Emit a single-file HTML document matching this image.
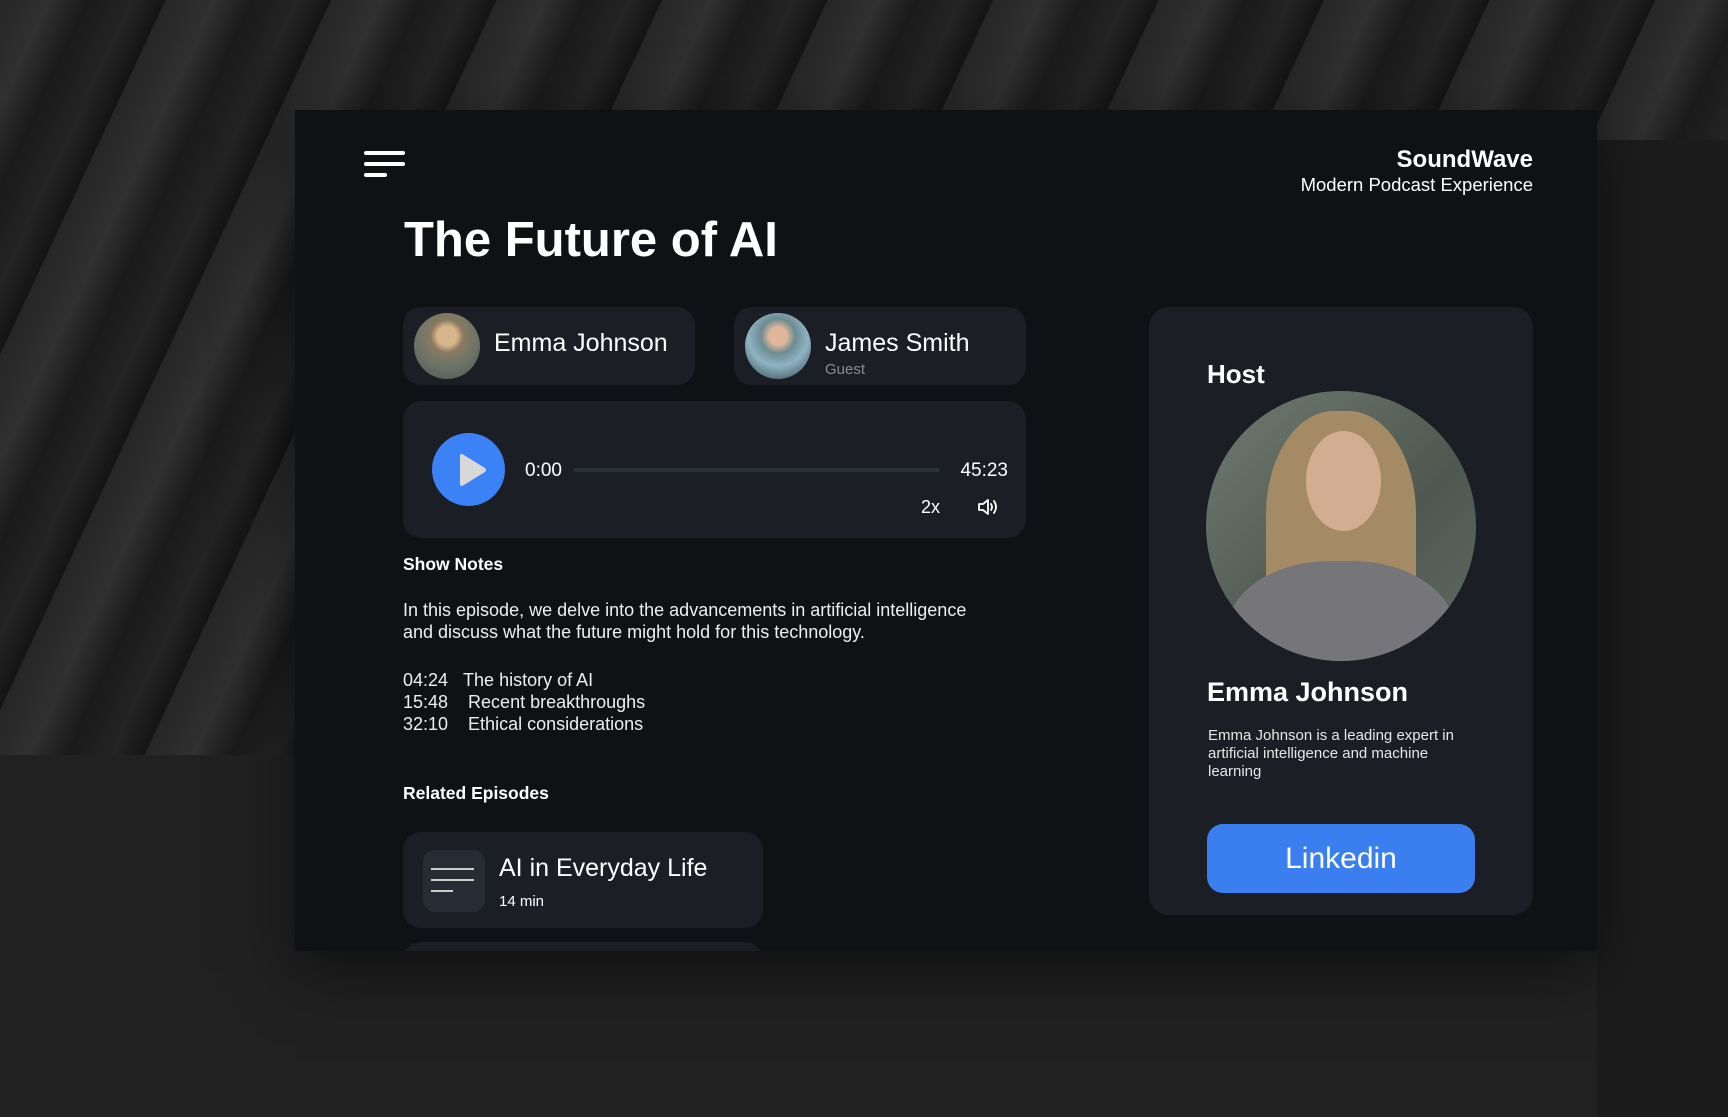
<!DOCTYPE html>
<html><head><meta charset="utf-8"><style>
*{margin:0;padding:0;box-sizing:border-box}
body{width:1728px;height:1117px;overflow:hidden;position:relative;font-family:"Liberation Sans",sans-serif;color:#fff;
background:#212121;}
.bgtop{position:absolute;left:0;top:0;width:1728px;height:755px;
background:
repeating-linear-gradient(115deg,#262626 0px,#303030 45px,#1a1a1a 80px,#242424 120px,#141414 150px);}
.bgright{position:absolute;left:1597px;top:140px;width:131px;height:977px;background:#1c1c1c}
.panel{position:absolute;left:295px;top:110px;width:1302px;height:841px;background:#0f1115;overflow:hidden;box-shadow:0 20px 60px rgba(0,0,0,.5)}
.abs{position:absolute}
.ham span{position:absolute;left:0;height:4px;border-radius:2px;background:#fff}
.card{position:absolute;background:#1b1e25;border-radius:18px}
.av{position:absolute;border-radius:50%;overflow:hidden}
</style></head><body>
<div class="bgtop"></div><div class="bgright"></div>
<div class="panel">
 <div class="abs ham" style="left:69px;top:41px;width:42px;height:26px">
  <span style="top:0;width:41px"></span><span style="top:11px;width:41px"></span><span style="top:22px;width:23px"></span>
 </div>
 <div class="abs" style="right:64px;top:36px;text-align:right">
  <div style="font-size:24px;font-weight:bold;line-height:28px">SoundWave</div>
  <div style="font-size:18.5px;line-height:22px">Modern Podcast Experience</div>
 </div>
 <div class="abs" style="left:109px;top:98px;font-size:49px;font-weight:bold;line-height:64px">The Future of AI</div>

 <div class="card" style="left:108px;top:197px;width:292px;height:78px">
  <div class="av" style="left:11px;top:6px;width:66px;height:66px;background:radial-gradient(circle at 50% 35%,#d9b58c 0 18%,#8a7a62 30%,#6d7468 55%,#4e5550 100%)"></div>
  <div class="abs" style="left:91px;top:22px;font-size:25px">Emma Johnson</div>
 </div>
 <div class="card" style="left:439px;top:197px;width:292px;height:78px">
  <div class="av" style="left:11px;top:6px;width:66px;height:66px;background:radial-gradient(circle at 50% 35%,#e0b79a 0 16%,#6d8b93 32%,#8fb3c4 55%,#2f3f44 100%)"></div>
  <div class="abs" style="left:91px;top:22px;font-size:25px">James Smith</div>
  <div class="abs" style="left:91px;top:54px;font-size:15px;color:#8a8d94">Guest</div>
 </div>

 <div class="card" style="left:108px;top:291px;width:623px;height:137px">
  <div class="av" style="left:29px;top:32px;width:73px;height:73px;background:#3b82f6"></div>
  <svg class="abs" style="left:55px;top:52px" width="30" height="34"><path d="M2 3 Q2 0 5 1.5 L27 15 Q29 17 27 19 L5 32.5 Q2 34 2 31Z" fill="#d8d8d8"/></svg>
  <div class="abs" style="left:122px;top:59px;font-size:19px">0:00</div>
  <div class="abs" style="left:171px;top:67px;width:366px;height:4px;border-radius:2px;background:#2c3038"></div>
  <div class="abs" style="right:18px;top:59px;font-size:19px">45:23</div>
  <div class="abs" style="left:518px;top:96px;font-size:18px">2x</div>
  <svg class="abs" style="left:573px;top:95px" width="24" height="22" fill="none" stroke="#fff" stroke-width="1.8" stroke-linejoin="round" stroke-linecap="round"><path d="M3 8h4l5-4v14l-5-4H3z"/><path d="M15 8q2 3 0 6M18 5q4 6 0 12"/></svg>
 </div>

 <div class="abs" style="left:108px;top:444px;font-size:17.5px;font-weight:bold">Show Notes</div>
 <div class="abs" style="left:108px;top:489px;font-size:18px;line-height:22px;width:585px;color:#eee">In this episode, we delve into the advancements in artificial intelligence and discuss what the future might hold for this technology.</div>
 <div class="abs" style="left:108px;top:559px;font-size:18px;line-height:22px;color:#eee">
  <div>04:24&nbsp;&nbsp;&nbsp;The history of AI</div>
  <div>15:48&nbsp;&nbsp;&nbsp;&nbsp;Recent breakthroughs</div>
  <div>32:10&nbsp;&nbsp;&nbsp;&nbsp;Ethical considerations</div>
 </div>
 <div class="abs" style="left:108px;top:673px;font-size:17.5px;font-weight:bold">Related Episodes</div>
 <div class="card" style="left:108px;top:722px;width:360px;height:96px">
  <div class="abs" style="left:20px;top:18px;width:62px;height:62px;border-radius:12px;background:#272b33">
   <div class="abs" style="left:8px;top:18px;width:43px;height:2px;background:#ccc"></div>
   <div class="abs" style="left:8px;top:29px;width:43px;height:2px;background:#ccc"></div>
   <div class="abs" style="left:8px;top:40px;width:22px;height:2px;background:#ccc"></div>
  </div>
  <div class="abs" style="left:96px;top:22px;font-size:25px">AI in Everyday Life</div>
  <div class="abs" style="left:96px;top:61px;font-size:15px">14 min</div>
 </div>
 <div class="card" style="left:108px;top:832px;width:360px;height:96px"></div>

 <div class="card" style="left:854px;top:197px;width:384px;height:608px;border-radius:20px">
  <div class="abs" style="left:58px;top:52px;font-size:26px;font-weight:bold">Host</div>
  <div class="av" style="left:57px;top:84px;width:270px;height:270px;background:linear-gradient(135deg,#6f7a70,#4e5850 60%,#5f6a62)">
   <div class="abs" style="left:60px;top:20px;width:150px;height:230px;border-radius:45% 45% 20% 20%;background:#a58a66"></div>
   <div class="abs" style="left:100px;top:40px;width:75px;height:100px;border-radius:50%;background:#d3ad92"></div>
   <div class="abs" style="left:20px;top:170px;width:230px;height:160px;border-radius:45% 45% 0 0;background:#76767a"></div>
  </div>
  <div class="abs" style="left:58px;top:370px;font-size:27px;font-weight:bold">Emma Johnson</div>
  <div class="abs" style="left:59px;top:420px;width:262px;font-size:15px;line-height:18px;color:#e6e6e6">Emma Johnson is a leading expert in artificial intelligence and machine learning</div>
  <div class="abs" style="left:58px;top:517px;width:268px;height:69px;border-radius:16px;background:#3b7ef0;font-size:30px;text-align:center;line-height:69px">Linkedin</div>
 </div>
</div>
</body></html>
